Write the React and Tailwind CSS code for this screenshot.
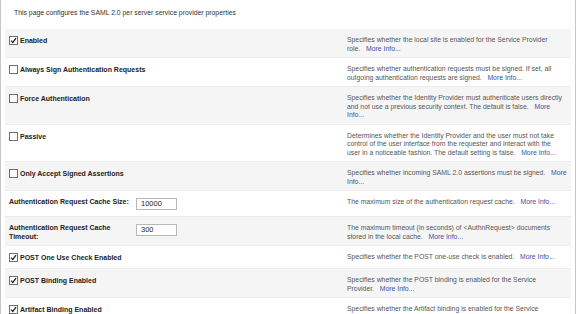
import React from 'react';

// description lines follow the wrapping of the original page
const rows = [
  { type: 'check', label: 'Enabled', checked: true, lines: ['Specifies whether the local site is enabled for the Service Provider', 'role.'], more: 'end' },
  { type: 'check', label: 'Always Sign Authentication Requests', checked: false, lines: ['Specifies whether authentication requests must be signed. If set, all', 'outgoing authentication requests are signed.'], more: 'end' },
  { type: 'check', label: 'Force Authentication', checked: false, lines: ['Specifies whether the Identity Provider must authenticate users directly', 'and not use a previous security context. The default is false.'], more: 'split' },
  { type: 'check', label: 'Passive', checked: false, lines: ['Determines whether the Identity Provider and the user must not take', 'control of the user interface from the requester and interact with the', 'user in a noticeable fashion. The default setting is false.'], more: 'end' },
  { type: 'check', label: 'Only Accept Signed Assertions', checked: false, lines: ['Specifies whether incoming SAML 2.0 assertions must be signed.'], more: 'split' },
  { type: 'input', label: 'Authentication Request Cache Size:', value: '10000', lines: ['The maximum size of the authentication request cache.'], more: 'end' },
  { type: 'input', label: 'Authentication Request Cache Timeout:', value: '300', lines: ['The maximum timeout (in seconds) of <AuthnRequest> documents', 'stored in the local cache.'], more: 'end' },
  { type: 'check', label: 'POST One Use Check Enabled', checked: true, lines: ['Specifies whether the POST one-use check is enabled.'], more: 'end' },
  { type: 'check', label: 'POST Binding Enabled', checked: true, lines: ['Specifies whether the POST binding is enabled for the Service', 'Provider.'], more: 'end' },
  { type: 'check', label: 'Artifact Binding Enabled', checked: true, lines: ['Specifies whether the Artifact binding is enabled for the Service', 'Provider.'], more: 'end' },
];

function Checkbox({ checked }) {
  return (
    <span className="inline-flex items-center justify-center w-[9px] h-[9px] border border-[#707070] bg-white shrink-0">
      {checked && (
        <svg width="7" height="7" viewBox="0 0 7 7">
          <path d="M1 3.6 L2.8 5.4 L6 1.2" fill="none" stroke="#222" strokeWidth="1.3" />
        </svg>
      )}
    </span>
  );
}

function Description({ lines, more }) {
  const last = lines.length - 1;
  return (
    <div className="text-[6.85px] leading-[8.5px] text-[#555] whitespace-nowrap">
      {lines.map((l, i) => (
        <div key={i}>
          {l}
          {i === last && (
            <>
              {'\u00a0\u00a0\u00a0'}
              <span className="text-[#3a4fa8]">{more === 'split' ? 'More' : 'More Info...'}</span>
            </>
          )}
        </div>
      ))}
      {more === 'split' && <div className="text-[#3a4fa8]">Info...</div>}
    </div>
  );
}

export default function App() {
  return (
    <div className="w-[576px] h-[314px] overflow-hidden bg-white font-['Liberation_Sans',Arial,sans-serif]">
      <div className="h-full border-l-[1.5px] border-r border-[#c3c6ca] px-[4px] w-[576px]">
        <p className="text-[6.85px] leading-[9px] text-[#333] pl-[9px] pt-[8px] pb-[12px]">
          This page configures the SAML 2.0 per server service provider properties
        </p>
        <div>
          {rows.map((r, i) => (
            <div
              key={i}
              className={`flex ${r.type === 'input' ? 'min-h-[26px]' : 'min-h-[23px]'} border-b border-[#ececec] ${i % 2 === 0 ? 'bg-[#f5f5f5]' : 'bg-white'} pt-[7px] pb-[4px]`}
            >
              <div className="w-[342px] shrink-0 pl-[4px]">
                {r.type === 'check' ? (
                  <div className="flex items-center gap-[2px] h-[9px]">
                    <Checkbox checked={r.checked} />
                    <span className="text-[7px] font-bold text-[#222] leading-[9px]">{r.label}</span>
                  </div>
                ) : (
                  <div className="flex items-start">
                    <span className="w-[127px] text-[7px] font-bold text-[#222] leading-[8.5px]">{r.label}</span>
                    <span className="w-[41px] h-[12px] border border-[#b8b8b8] bg-white text-[7.5px] leading-[10px] text-[#222] pl-[4px]">
                      {r.value}
                    </span>
                  </div>
                )}
              </div>
              <Description lines={r.lines} more={r.more} />
            </div>
          ))}
        </div>
      </div>
    </div>
  );
}
